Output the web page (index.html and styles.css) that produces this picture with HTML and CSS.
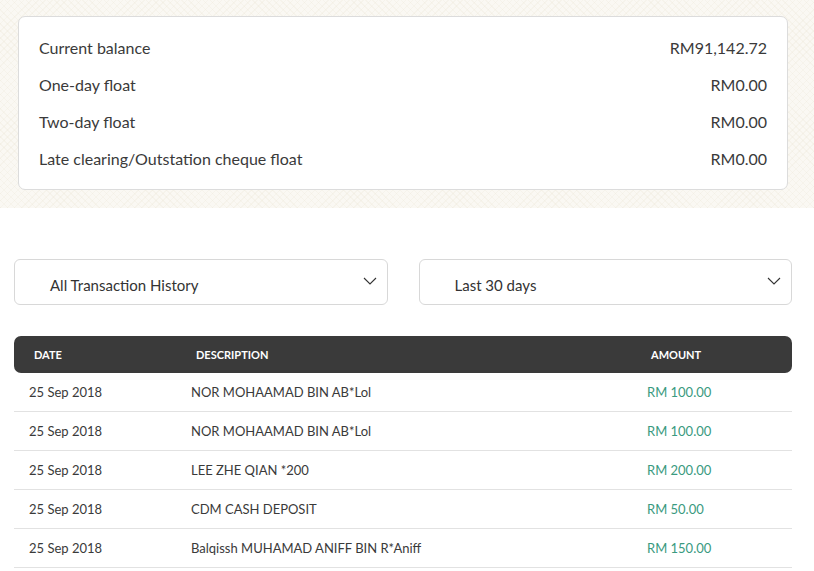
FILE: index.html
```html
<!DOCTYPE html>
<html>
<head>
<meta charset="utf-8">
<link rel="stylesheet" href="styles.css">
</head>
<body>
<div class="hero">
  <div class="card">
    <div class="crow"><span>Current balance</span><span>RM91,142.72</span></div>
    <div class="crow"><span>One-day float</span><span>RM0.00</span></div>
    <div class="crow"><span>Two-day float</span><span>RM0.00</span></div>
    <div class="crow"><span>Late clearing/Outstation cheque float</span><span>RM0.00</span></div>
  </div>
</div>
<div class="filters">
  <div class="select"><span>All Transaction History</span>
    <svg width="14" height="8" viewBox="0 0 14 8"><path d="M1 1l6 6 6-6" fill="none" stroke="#333" stroke-width="1.1"/></svg>
  </div>
  <div class="select"><span>Last 30 days</span>
    <svg width="14" height="8" viewBox="0 0 14 8"><path d="M1 1l6 6 6-6" fill="none" stroke="#333" stroke-width="1.1"/></svg>
  </div>
</div>
<div class="table">
  <div class="thead"><span class="c1">DATE</span><span class="c2">DESCRIPTION</span><span class="c3">AMOUNT</span></div>
  <div class="trow"><span class="c1">25 Sep 2018</span><span class="c2">NOR MOHAAMAD BIN AB*Lol</span><span class="c3 amt">RM 100.00</span></div>
  <div class="trow"><span class="c1">25 Sep 2018</span><span class="c2">NOR MOHAAMAD BIN AB*Lol</span><span class="c3 amt">RM 100.00</span></div>
  <div class="trow"><span class="c1">25 Sep 2018</span><span class="c2">LEE ZHE QIAN *200</span><span class="c3 amt">RM 200.00</span></div>
  <div class="trow"><span class="c1">25 Sep 2018</span><span class="c2">CDM CASH DEPOSIT</span><span class="c3 amt">RM 50.00</span></div>
  <div class="trow"><span class="c1">25 Sep 2018</span><span class="c2">Balqissh MUHAMAD ANIFF BIN R*Aniff</span><span class="c3 amt">RM 150.00</span></div>
</div>
</body>
</html>
```
FILE: styles.css
```css
html, body { margin: 0; padding: 0; background: #fff; }
body { font-family: Lato, "Open Sans", sans-serif; color: #333; width: 814px; overflow: hidden; }
.hero {
  height: 208px;
  padding: 16px 26px 0 18px;
  box-sizing: border-box;
  background-color: #faf8f3;
  background-image:
    repeating-linear-gradient(45deg, rgba(232,226,208,0.22) 0 1px, transparent 1px 5px),
    repeating-linear-gradient(-45deg, rgba(232,226,208,0.22) 0 1px, transparent 1px 5px);
}
.card {
  background: #fff;
  border: 1px solid #dcdcdc;
  border-radius: 7px;
  height: 174px;
  box-sizing: border-box;
  padding: 12px 20px 0 20px;
  display: flex;
  flex-direction: column;
}
.crow {
  display: flex;
  justify-content: space-between;
  font-size: 16px;
  line-height: 37px;
  color: #3a3a3a;
}
.filters {
  display: flex;
  gap: 31px;
  padding: 51px 22px 0 14px;
}
.select {
  flex: 1;
  height: 46px;
  box-sizing: border-box;
  border: 1px solid #d8d8d8;
  border-radius: 6px;
  display: flex;
  align-items: center;
  justify-content: space-between;
  padding: 5px 10px 0 35px;
  font-size: 15px;
  color: #333;
}
.select svg { margin-top: -7px; }
.table { margin: 31px 22px 0 14px; }
.thead {
  background: #3a3a3a;
  border-radius: 7px;
  height: 37px;
  display: flex;
  align-items: center;
  color: #fff;
  font-size: 11px;
  font-weight: 700;
}
.thead .c1 { width: 182px; padding-left: 20px; box-sizing: border-box; }
.thead .c2 { width: 455px; }
.trow {
  display: flex;
  align-items: center;
  height: 39px;
  border-bottom: 1px solid #e2e2e2;
  box-sizing: border-box;
  font-size: 13px;
  color: #3a3a3a;
}
.trow .c1 { width: 177px; padding-left: 15px; box-sizing: border-box; }
.trow .c2 { width: 456px; }
.amt { color: #3a9a80; }
```
